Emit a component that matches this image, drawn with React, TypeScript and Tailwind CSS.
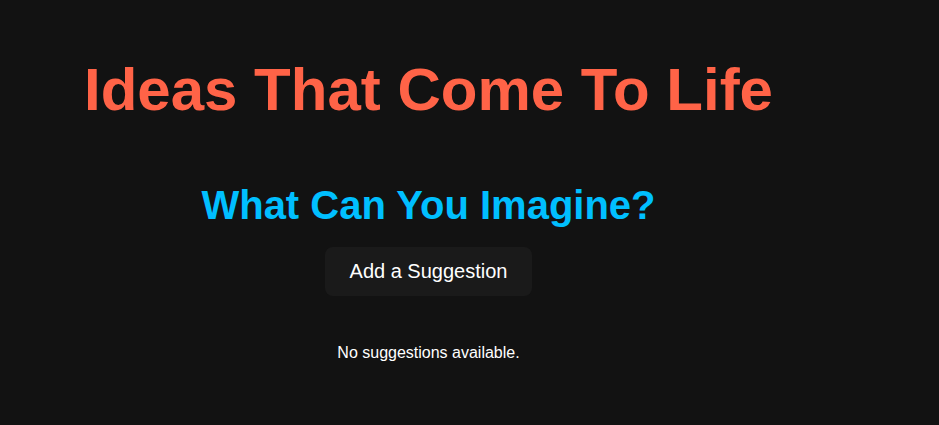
export default function App() {
  return (
    <div className="min-h-screen bg-[#121212] font-['Liberation_Sans',Arial,sans-serif] text-white">
      <div className="flex w-[857px] flex-col items-center pt-[56px] text-center">
        <h1 className="text-[60px] font-bold leading-[68px] text-[#ff6347]">Ideas That Come To Life</h1>

        <h2 className="mt-[58px] text-[40px] font-bold leading-[46px] text-[#00bfff]">What Can You Imagine?</h2>

        <button className="mt-[19px] rounded-lg border border-transparent bg-[#1a1a1a] px-6 py-3 text-[20px] leading-[23px] text-white">
          Add a Suggestion
        </button>

        <div className="mt-[45px] text-base leading-6">
          <p>No suggestions available.</p>
        </div>
      </div>
    </div>
  );
}
